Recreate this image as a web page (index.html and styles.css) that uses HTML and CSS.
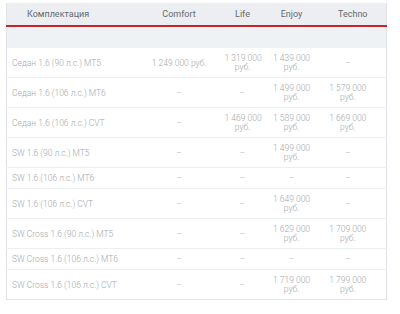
FILE: index.html
```html
<!DOCTYPE html>
<html lang="ru">
<head>
<meta charset="utf-8">
<link rel="stylesheet" href="styles.css">
</head>
<body>
<table class="prices">
  <colgroup>
    <col class="c-name"><col class="c-comfort"><col class="c-life"><col class="c-enjoy"><col class="c-techno">
  </colgroup>
  <thead>
    <tr>
      <th class="name">Комплектация</th>
      <th>Comfort</th>
      <th>Life</th>
      <th>Enjoy</th>
      <th>Techno</th>
    </tr>
  </thead>
  <tbody>
    <tr class="group"><td colspan="5"></td></tr>
    <tr><td class="name">Седан 1.6 (90 л.с.) MT5</td><td>1&nbsp;249&nbsp;000&nbsp;руб.</td><td>1&nbsp;319&nbsp;000 руб.</td><td>1&nbsp;439&nbsp;000 руб.</td><td class="dash">–</td></tr>
    <tr><td class="name">Седан 1.6 (106 л.с.) MT6</td><td class="dash">–</td><td class="dash">–</td><td>1&nbsp;499&nbsp;000 руб.</td><td>1&nbsp;579&nbsp;000 руб.</td></tr>
    <tr><td class="name">Седан 1.6 (106 л.с.) CVT</td><td class="dash">–</td><td>1&nbsp;469&nbsp;000 руб.</td><td>1&nbsp;589&nbsp;000 руб.</td><td>1&nbsp;669&nbsp;000 руб.</td></tr>
    <tr><td class="name">SW 1.6 (90 л.с.) MT5</td><td class="dash">–</td><td class="dash">–</td><td>1&nbsp;499&nbsp;000 руб.</td><td class="dash">–</td></tr>
    <tr><td class="name">SW 1.6 (106 л.с.) MT6</td><td class="dash">–</td><td class="dash">–</td><td class="dash">–</td><td class="dash">–</td></tr>
    <tr><td class="name">SW 1.6 (106 л.с.) CVT</td><td class="dash">–</td><td class="dash">–</td><td>1&nbsp;649&nbsp;000 руб.</td><td class="dash">–</td></tr>
    <tr><td class="name">SW Cross 1.6 (90 л.с.) MT5</td><td class="dash">–</td><td class="dash">–</td><td>1&nbsp;629&nbsp;000 руб.</td><td>1&nbsp;709&nbsp;000 руб.</td></tr>
    <tr><td class="name">SW Cross 1.6 (106 л.с.) MT6</td><td class="dash">–</td><td class="dash">–</td><td class="dash">–</td><td class="dash">–</td></tr>
    <tr><td class="name">SW Cross 1.6 (106 л.с.) CVT</td><td class="dash">–</td><td class="dash">–</td><td>1&nbsp;719&nbsp;000 руб.</td><td>1&nbsp;799&nbsp;000 руб.</td></tr>
  </tbody>
</table>
</body>
</html>
```
FILE: styles.css
```css
html, body {
  margin: 0;
  background: #ffffff;
}
body {
  padding: 3px 0 0 6px;
  font-family: Roboto, "Liberation Sans", sans-serif;
}
.prices {
  table-layout: fixed;
  width: 380px;
  border-collapse: collapse;
  border: 1px solid #dfe2e6;
  border-top: none;
}
.c-name { width: 130px; }
.c-comfort { width: 85px; }
.c-life { width: 42px; }
.c-enjoy { width: 56px; }
.c-techno { width: 67px; }

.prices th {
  height: 23px;
  padding: 0;
  background: #eceef1;
  border-bottom: 2px solid #c4262e;
  font-size: 9px;
  font-weight: 400;
  color: #666a70;
  text-align: center;
  box-sizing: border-box;
}
.prices th.name {
  text-align: left;
  padding-left: 20px;
}
.prices td {
  padding: 6px 3px 5px;
  font-size: 8.5px;
  line-height: 9px;
  color: #a4a7ab;
  text-align: center;
  border-bottom: 1px solid #eceef0;
  font-weight: 300;
}
.prices td:last-child {
  padding-right: 13px;
}
.prices td.name {
  text-align: left;
  padding-left: 5px;
}
.prices td.dash {
  color: #b4b7bb;
}
.prices tr.group td {
  height: 22px;
  padding: 0;
  background: #eef2f5;
  border-bottom: none;
  box-sizing: border-box;
}
.prices tbody tr:last-child td {
  border-bottom: none;
}
```
